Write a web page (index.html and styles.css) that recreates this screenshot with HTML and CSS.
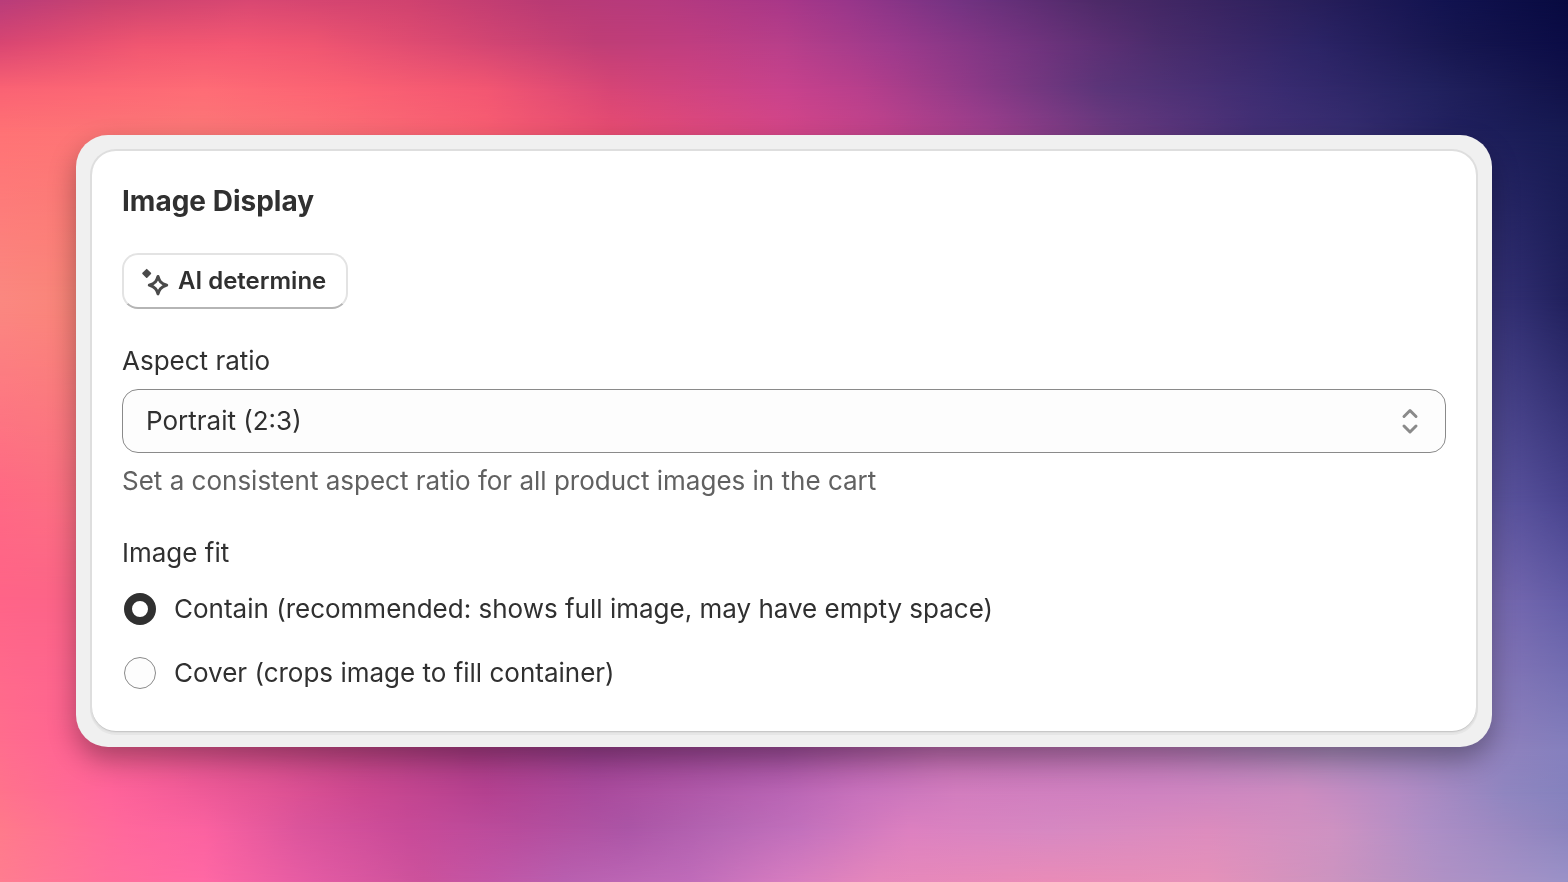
FILE: index.html
```html
<!DOCTYPE html>
<html lang="en">
<head>
<meta charset="utf-8">
<meta name="viewport" content="width=device-width, initial-scale=1">
<title>Image Display</title>
<link rel="stylesheet" href="styles.css">
</head>
<body class="page">
  <div class="backdrop" aria-hidden="true">
    <div class="band band-11"></div>
    <div class="band band-10"></div>
    <div class="band band-9"></div>
    <div class="band band-8"></div>
    <div class="band band-7"></div>
    <div class="band band-6"></div>
    <div class="band band-5"></div>
    <div class="band band-4"></div>
    <div class="band band-3"></div>
    <div class="band band-2"></div>
    <div class="band band-1"></div>
  </div>
  <main class="frame">
    <form class="card">
      <h1 class="title">Image Display</h1>
      <button class="ai-button" type="button">
        <svg class="ai-icon" viewBox="0 0 30 32" aria-hidden="true">
          <path d="M6.700 4.700 10.400 8.400 6.700 12.100 3 8.400Z" fill="#4a4a4a" stroke="#4a4a4a" stroke-width="1.600" stroke-linejoin="round"/>
          <path d="M18 11.500C19.300 15.800 20.400 18 26.700 20.200C20.400 22.400 19.300 24.600 18 28.900C16.700 24.600 15.600 22.400 9.300 20.200C15.600 18 16.700 15.800 18 11.500Z" fill="none" stroke="#4a4a4a" stroke-width="3" stroke-linejoin="round"/>
        </svg>
        <span>AI determine</span>
      </button>
      <div class="field">
        <label class="label" for="ratio">Aspect ratio</label>
        <div class="select-wrap">
          <select class="select" id="ratio" aria-describedby="ratio-help">
            <option>Portrait (2:3)</option>
          </select>
          <svg class="select-icon" viewBox="0 0 40 40" aria-hidden="true">
            <path d="M14 15.500 20 9.500 26 15.500M14 25 20 31 26 25" fill="none" stroke="#8a8a8a" stroke-width="3" stroke-linecap="round" stroke-linejoin="round"/>
          </svg>
        </div>
        <p class="help" id="ratio-help">Set a consistent aspect ratio for all product images in the cart</p>
      </div>
      <fieldset class="choices">
        <legend class="label">Image fit</legend>
        <label class="choice"><input class="radio" type="radio" name="fit" checked><span>Contain (recommended: shows full image, may have empty space)</span></label>
        <label class="choice"><input class="radio" type="radio" name="fit"><span>Cover (crops image to fill container)</span></label>
      </fieldset>
    </form>
  </main>
</body>
</html>
```
FILE: styles.css
```css
* { box-sizing: border-box; }

.page {
  margin: 0;
  min-height: 100vh;
  display: flex;
  align-items: center;
  padding: 76px;
  font-family: Inter, "Open Sans", sans-serif;
  font-size: 26px;
  line-height: 40px;
  color: #303030;
}

.backdrop { position: fixed; inset: 0; z-index: -1; }
.band { position: absolute; inset: 0; }

/* Each band holds the colours at one height and fades into the band below. */
.band-1 {
  background: linear-gradient(90deg, #b83c7a 0%, #c9426f 7%, #d84772 16%, #cf426f 26%, #b83a74 35%, #b53a7e 42%, #a83788 50%, #98368a 54%, #733382 61%, #4d2a68 70%, #2a205c 83%, #121350 92%, #080a40 100%);
  mask-image: linear-gradient(180deg, #000 0%, transparent 5%);
}
.band-2 {
  background: linear-gradient(90deg, #d94672 0%, #f05671 9%, #f45873 15%, #ef5571 20%, #d94872 29%, #c03e76 38%, #c03e80 44%, #b83f8a 50%, #9c3a8c 57%, #7a3582 64%, #4a2c6c 74%, #2c2466 84%, #16164f 93%, #0b0c46 100%);
  mask-image: linear-gradient(180deg, #000 5%, transparent 10%);
}
.band-3 {
  background: linear-gradient(90deg, #fa6274 0%, #fe6c76 13%, #fb6273 22%, #f25672 31%, #d64576 39%, #c8428c 50%, #b73f8c 55%, #8e3a88 62%, #5c3579 70%, #382b70 82%, #22225f 91%, #111249 100%);
  mask-image: linear-gradient(180deg, #000 10%, transparent 15%);
}
.band-4 {
  background: linear-gradient(90deg, #ff7275 0%, #fb7877 12%, #fc7076 20%, #f85e72 31%, #e74c72 39%, #d44688 50%, #c0438c 56%, #9d3f8d 63%, #6b3a80 71%, #443076 80%, #362d70 86%, #20205e 93%, #161a52 100%);
  mask-image: linear-gradient(180deg, #000 15%, transparent 34%);
}
.band-5 {
  background: linear-gradient(90deg, #fb8880 0%, #f98578 5%, #38347a 95%, #20205c 100%);
  mask-image: linear-gradient(180deg, #000 34%, transparent 57%);
}
.band-6 {
  background: linear-gradient(90deg, #ff6884 0%, #fb7082 5%, #6058a2 95%, #48438e 100%);
  mask-image: linear-gradient(180deg, #000 57%, transparent 68%);
}
.band-7 {
  background: linear-gradient(90deg, #ff6488 0%, #fb6488 5%, #7a6bb2 95%, #625ca6 100%);
  mask-image: linear-gradient(180deg, #000 68%, transparent 85%);
}
.band-8 {
  background: linear-gradient(90deg, #ff6e8e 0%, #ff6394 5%, #e65692 13%, #c84889 22%, #ac3c86 30%, #9c4090 38%, #a34f9e 50%, #c06cb0 60%, #bc78b8 74%, #a98abc 85%, #9582bc 93%, #8580be 100%);
  mask-image: linear-gradient(180deg, #000 85%, transparent 90%);
}
.band-9 {
  background: linear-gradient(90deg, #ff738c 0%, #ff649a 7%, #f55d99 11%, #e25495 17%, #cc4890 23%, #b44190 31%, #a94a9c 38%, #b05aaa 45%, #b965b4 50%, #c872bc 55%, #d27dbe 61%, #cf82c0 73%, #cd8cc0 83%, #b58cc4 89%, #9086c0 96%, #8582be 100%);
  mask-image: linear-gradient(180deg, #000 90%, transparent 94%);
}
.band-10 {
  background: linear-gradient(90deg, #ff7a8b 0%, #ff689c 8%, #fb62a0 13%, #dc559c 19%, #c84a98 26%, #b74c9c 33%, #ab55a6 40%, #b566b3 46%, #c270bc 51%, #dc80c0 58%, #d688c2 67%, #dc8cbe 77%, #ce92c2 85%, #ae8fc6 91%, #8b84be 100%);
  mask-image: linear-gradient(180deg, #000 94%, transparent 100%);
}
.band-11 {
  background: linear-gradient(90deg, #ff7d90 0%, #ff6f9c 7%, #ff68a4 13%, #e45ba4 20%, #cc529c 27%, #c355a6 31%, #b960b0 36%, #c06cba 44%, #d67cc0 50%, #e688bc 56%, #ea8cb8 67%, #e692ba 77%, #cc94c0 85%, #b092c6 92%, #9b92c8 100%);
}

.frame {
  width: 100%;
  padding: 16px;
  border-radius: 32px;
  background: #f0f0f0;
  box-shadow: 0 12px 28px rgba(0, 0, 0, .32);
}
.card {
  padding: 30px 30px 38px;
  border-radius: 24px;
  background: #fff;
  box-shadow: 0 1px 0 #c8c8c8, 0 0 0 2px #dedede, 0 2px 0 2px #e6e6e6;
  display: flex;
  flex-direction: column;
  align-items: flex-start;
}
.title { margin: 0; font-size: 28px; line-height: 40px; font-weight: 700; }
.ai-button {
  display: flex;
  align-items: center;
  gap: 8px;
  height: 56px;
  margin-top: 32px;
  padding: 0 20px 0 16px;
  border: 2px solid #e3e3e3;
  border-bottom-color: #b5b5b5;
  border-radius: 16px;
  background: #fff;
  color: inherit;
  font: 600 24px/32px Inter, "Open Sans", sans-serif;
}
.ai-icon { width: 30px; height: 32px; }
.field { width: 100%; margin-top: 32px; }
.label { display: block; padding: 0; }
.select-wrap { position: relative; margin-top: 8px; }
.select {
  display: block;
  width: 100%;
  height: 64px;
  padding: 0 72px 0 23px;
  border: 1px solid #8a8a8a;
  border-radius: 16px;
  background: #fdfdfd;
  color: inherit;
  font: inherit;
  appearance: none;
}
.select-icon {
  position: absolute;
  top: 12px;
  right: 16px;
  width: 40px;
  height: 40px;
  pointer-events: none;
}
.help { margin: 8px 0 0; color: #616161; }
.choices { margin: 32px 0 0; padding: 0; border: 0; }
.choice { display: flex; align-items: center; gap: 18px; padding: 0 2px; margin-top: 16px; }
.choice + .choice { margin-top: 24px; }
.radio {
  appearance: none;
  width: 32px;
  height: 32px;
  margin: 0;
  border: 1px solid #8a8a8a;
  border-radius: 50%;
  background: #fdfdfd;
}
.radio:checked { border: 8px solid #303030; background: #fff; }
```
